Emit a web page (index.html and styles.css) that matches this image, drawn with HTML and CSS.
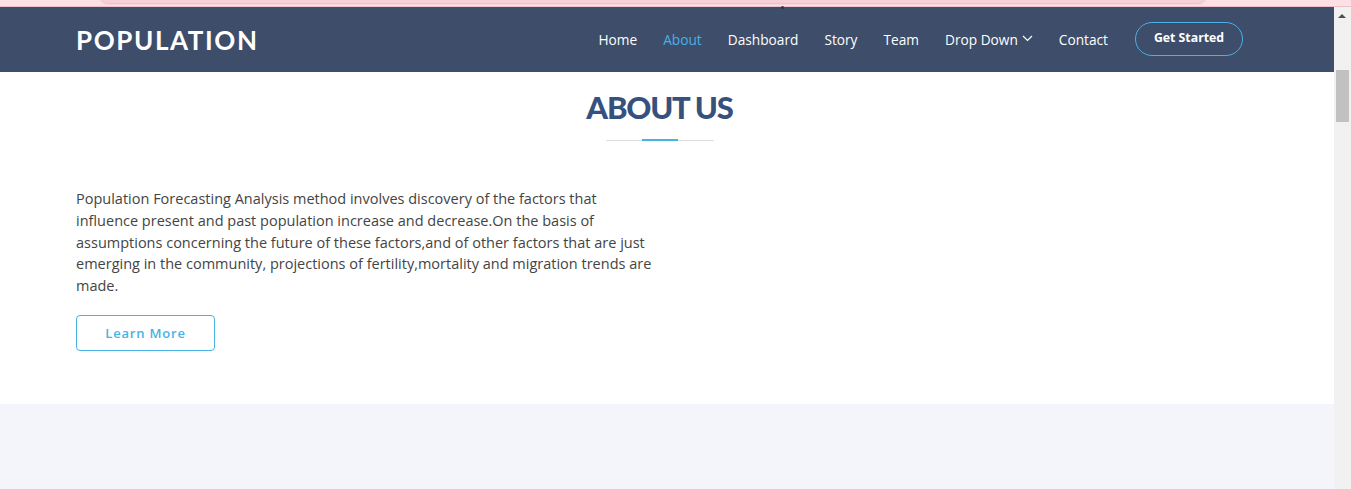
FILE: index.html
```html
<!DOCTYPE html>
<html lang="en">
<head>
<meta charset="utf-8">
<title>Population</title>
<link rel="stylesheet" href="styles.css">
</head>
<body>
<div class="page">
  <div class="topstrip"><div class="tab"></div><span class="dot"></span></div>
  <div class="viewport">
    <div class="main">
      <header class="header">
        <div class="container header-inner">
          <h1 class="logo">POPULATION</h1>
          <nav class="nav">
            <a class="nav-link" href="#">Home</a>
            <a class="nav-link active" href="#">About</a>
            <a class="nav-link" href="#">Dashboard</a>
            <a class="nav-link" href="#">Story</a>
            <a class="nav-link" href="#">Team</a>
            <a class="nav-link dropdown" href="#">Drop Down
              <svg class="chev" width="11" height="7" viewBox="0 0 11 7"><path d="M1 1l4.5 4.5L10 1" fill="none" stroke="#fff" stroke-width="1.2"/></svg>
            </a>
            <a class="nav-link" href="#">Contact</a>
            <a class="getstarted" href="#">Get Started</a>
          </nav>
        </div>
      </header>
      <section class="about">
        <div class="container">
          <div class="section-title">
            <h2>ABOUT US</h2>
            <div class="title-line"><span></span></div>
          </div>
          <div class="about-row">
            <div class="about-col">
              <p class="about-text">Population Forecasting Analysis method involves discovery of the factors that influence present and past population increase and decrease.On the basis of assumptions concerning the future of these factors,and of other factors that are just emerging in the community, projections of fertility,mortality and migration trends are made.</p>
              <a class="btn-learn" href="#">Learn More</a>
            </div>
          </div>
        </div>
      </section>
      <section class="gray"></section>
    </div>
    <div class="scrollbar">
      <div class="sb-arrow"></div>
      <div class="sb-thumb"></div>
    </div>
  </div>
</div>
</body>
</html>
```
FILE: styles.css
```css
* { box-sizing: border-box; }
html, body { margin: 0; padding: 0; }
body { overflow: hidden; font-family: "Open Sans", sans-serif; background: #fff; }
.page { width: 1351px; height: 489px; display: flex; flex-direction: column; }
.topstrip { height: 7px; background: #fde0e5; border-bottom: 1px solid #ecc2c9; position: relative; flex: none; }
.tab { position: absolute; left: 100px; width: 1106px; top: -6px; height: 9px; background: #f7d0d6; border-radius: 0 0 8px 8px; box-shadow: 0 1px 2px rgba(150,90,100,0.25); }
.dot { position: absolute; left: 781px; top: 6px; width: 3px; height: 3px; border-radius: 50%; background: #2a3446; }
.viewport { flex: 1; display: flex; min-height: 0; }
.main { flex: 1; display: flex; flex-direction: column; min-width: 0; }
.container { margin-left: 76px; width: 1167px; }
.header { background: #3d4d6a; height: 65px; flex: none; }
.header-inner { height: 100%; display: flex; align-items: center; justify-content: space-between; }
.logo { margin: 0; font-family: "Lato", sans-serif; font-weight: 700; font-size: 26px; letter-spacing: 1.6px; color: #fff; line-height: 1; padding-top: 1px; }
.nav { display: flex; align-items: center; }
.nav-link { color: #fff; text-decoration: none; font-size: 13.7px; font-weight: 500; margin-left: 26px; display: flex; align-items: center; }
.nav-link.active { color: #47b2e4; }
.chev { margin-left: 4px; margin-top: -2px; }
.getstarted { margin-left: 27px; margin-bottom: 2px; color: #fff; text-decoration: none; font-size: 12.3px; font-weight: 700; border: 1.5px solid #47b2e4; border-radius: 50px; height: 34px; width: 108px; display: flex; align-items: center; justify-content: center; padding-bottom: 3px; }
.about { background: #fff; height: 332px; flex: none; }
.section-title { text-align: center; padding-top: 19px; }
.section-title h2 { margin: 0; font-family: "Lato", sans-serif; font-weight: 900; font-size: 31px; letter-spacing: -1.2px; color: #37517e; line-height: 32px; }
.title-line { width: 108px; height: 1px; background: #ddd; margin: 17px auto 0; position: relative; }
.title-line span { position: absolute; left: 36px; top: -1px; width: 36px; height: 2px; background: #47b2e4; }
.about-row { padding-top: 47px; }
.about-col { width: 580px; }
.about-text { margin: 0; font-size: 14.5px; line-height: 21.8px; color: #444; }
.btn-learn { display: inline-flex; align-items: center; justify-content: center; margin-top: 18px; width: 139px; height: 36px; border: 1px solid #47b2e4; border-radius: 4px; color: #47b2e4; text-decoration: none; font-size: 13px; font-weight: 600; letter-spacing: 0.8px; }
.gray { flex: 1; background: #f3f5fa; }
.scrollbar { width: 17px; background: #f1f1f1; flex: none; position: relative; }
.sb-arrow { position: absolute; left: 4px; top: 7px; width: 0; height: 0; border-left: 4px solid transparent; border-right: 4px solid transparent; border-bottom: 4px solid #505050; }
.sb-thumb { position: absolute; left: 2px; top: 63px; width: 13px; height: 52px; background: #c1c1c1; }
```
